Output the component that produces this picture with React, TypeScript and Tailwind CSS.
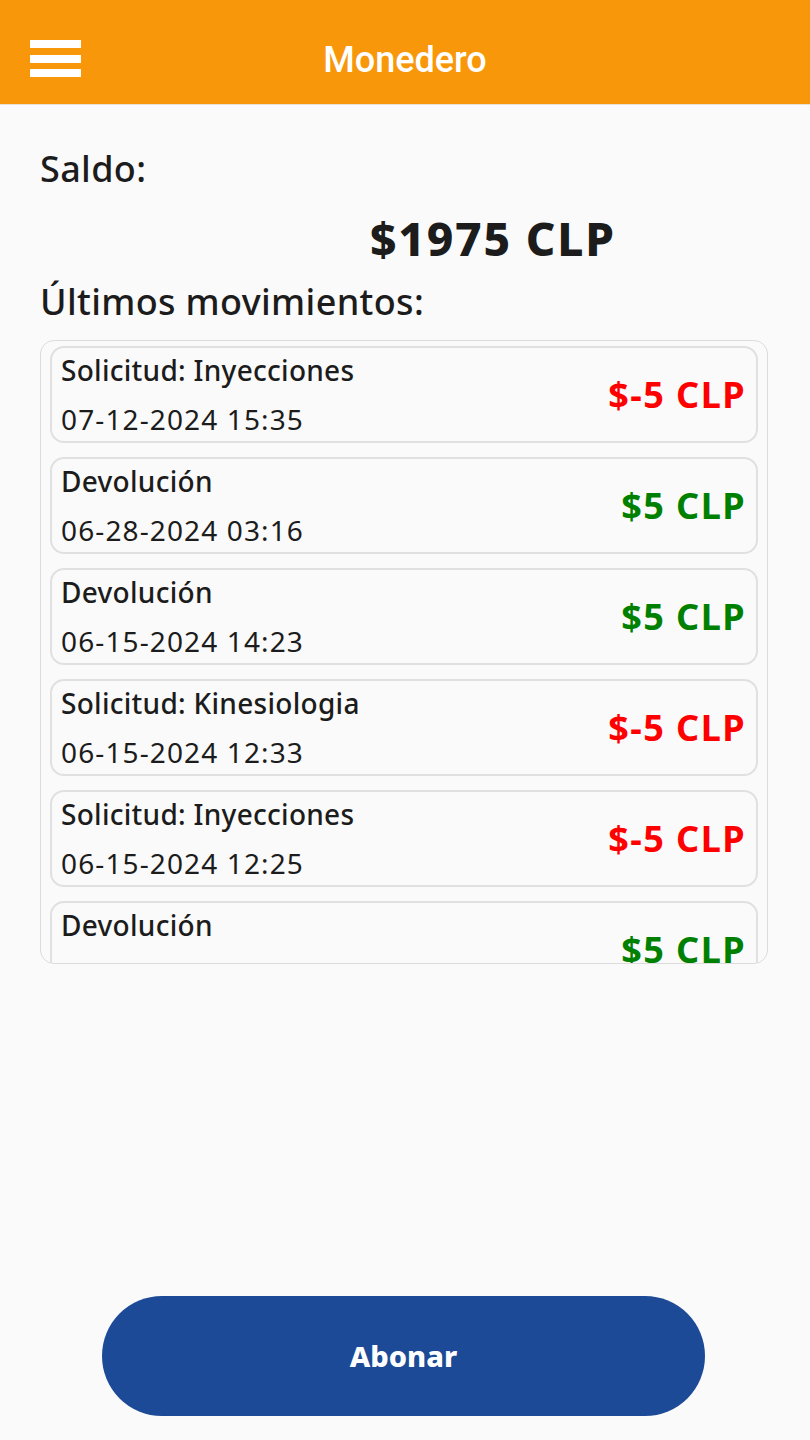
import React from "react";

interface Movimiento {
  title: string;
  date: string;
  amount: number;
}

const movimientos: Movimiento[] = [
  { title: "Solicitud: Inyecciones", date: "07-12-2024 15:35", amount: -5 },
  { title: "Devolución", date: "06-28-2024 03:16", amount: 5 },
  { title: "Devolución", date: "06-15-2024 14:23", amount: 5 },
  { title: "Solicitud: Kinesiologia", date: "06-15-2024 12:33", amount: -5 },
  { title: "Solicitud: Inyecciones", date: "06-15-2024 12:25", amount: -5 },
  { title: "Devolución", date: "06-15-2024 12:20", amount: 5 },
];

const App: React.FC = () => {
  return (
    <div className="w-[810px] h-[1440px] bg-[#fafafa] flex flex-col font-['Noto_Sans',sans-serif] text-[#1c1c1c]">
      {/* Header */}
      <header className="h-[105px] shrink-0 bg-[#f8970a] flex items-center relative border-b border-[#e8e2d8] pt-[13px]">
        <button className="ml-[30px] w-[51px] h-[37px] flex flex-col justify-between" aria-label="Menu">
          <span className="block h-[8px] w-full bg-white" />
          <span className="block h-[8px] w-full bg-white" />
          <span className="block h-[8px] w-full bg-white" />
        </button>
        <h1 className="absolute left-0 right-0 top-[15px] bottom-0 flex items-center justify-center text-white text-[36px] font-['Roboto',sans-serif] font-medium pointer-events-none">
          Monedero
        </h1>
      </header>

      {/* Content */}
      <main className="flex-1 flex flex-col px-[40px] pt-[40px]">
        <p className="text-[36px] leading-[48px] font-medium tracking-[0.01em]">Saldo:</p>
        <p className="pl-[330px] mt-[17px] text-[46px] leading-[56px] font-extrabold tracking-[0.04em]">$1975 CLP</p>
        <p className="mt-[12px] text-[36px] leading-[48px] font-medium tracking-[0.01em]">Últimos movimientos:</p>

        <div className="mt-[14px] w-[728px] h-[624px] shrink-0 border border-[#dcdcdc] rounded-[14px] overflow-hidden px-[9px] pt-[5px]">
          <div className="flex flex-col gap-[14px]">
            {movimientos.map((m, i) => (
              <div
                key={i}
                className="h-[97px] shrink-0 border-2 border-[#e0e0e0] rounded-[14px] flex items-center justify-between pl-[9px] pr-[10px]"
              >
                <div className="flex flex-col">
                  <span className="text-[28px] leading-[38px] font-medium tracking-[0.01em]">{m.title}</span>
                  <span className="mt-[11px] text-[28px] leading-[38px] tracking-[0.04em]">{m.date}</span>
                </div>
                <span
                  className={`text-[36px] leading-[44px] font-bold tracking-[0.04em] ${
                    m.amount < 0 ? "text-[#ff0000]" : "text-[#008000]"
                  }`}
                >
                  {`$${m.amount} CLP`}
                </span>
              </div>
            ))}
          </div>
        </div>

        <div className="flex-1" />

        <button className="ml-[62px] mb-[24px] w-[603px] h-[120px] rounded-full bg-[#1c4a97] text-white text-[29px] font-extrabold">
          Abonar
        </button>
      </main>
    </div>
  );
};

export default App;
